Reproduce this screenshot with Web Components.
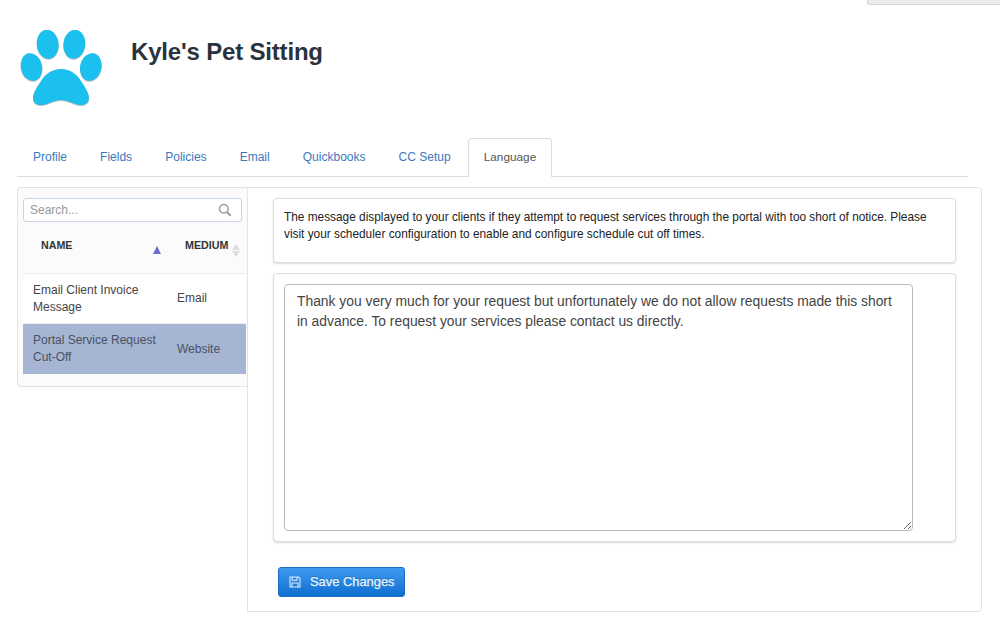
<!DOCTYPE html>
<html>
<head>
<meta charset="utf-8">
<title>Kyle's Pet Sitting</title>
<style>
html, body { margin: 0; background: #fff; }
body { font-family: "Liberation Sans", Arial, sans-serif; font-size: 12px; color: #333; }
</style>
</head>
<body>
<settings-page></settings-page>

<script>
// small helper, every element below has the same shadow setup
function shadow(el, html) {
    const root = el.attachShadow({ mode: 'open' });
    root.innerHTML = html;
    return root;
}

customElements.define('top-header', class extends HTMLElement {
    constructor() {
        super();
        shadow(this, `<style>
:host { display: block; }
.stub { height: 5px; width: 133px; margin-left: auto; background: #ececec; border: 1px solid #d4d4d4; border-top: 0; border-right: 0; border-radius: 0 0 0 3px; box-sizing: border-box; }
.row { display: flex; align-items: flex-start; padding: 25px 0 0 20px; height: 133px; box-sizing: border-box; }
svg { display: block; width: 82px; height: 77px; }
h1 { margin: 8px 0 0 29px; font-size: 24px; letter-spacing: -.18px; line-height: 28px; font-weight: bold; color: #2a323d; }
</style>
<div class="stub"></div>
<div class="row">
    <svg viewBox="20 30 82 77">
        <defs><filter id="s" x="-10%" y="-10%" width="120%" height="120%"><feDropShadow dx="0" dy="0.7" stdDeviation="0.5" flood-color="#555" flood-opacity=".55"/></filter></defs>
        <g fill="#1fc0ef" filter="url(#s)">
            <ellipse cx="47.7" cy="44.3" rx="10.9" ry="14.6" transform="rotate(-6 47.7 44.3)"/>
            <ellipse cx="74.3" cy="44.3" rx="10.9" ry="14.6" transform="rotate(6 74.3 44.3)"/>
            <ellipse cx="31.5" cy="67" rx="10.6" ry="14" transform="rotate(-13 31.5 67)"/>
            <ellipse cx="90.8" cy="67" rx="10.6" ry="14" transform="rotate(13 90.8 67)"/>
            <path d="M61 69C70 69 77 74 81 81C85 87 89 93 89 98C89 103 85 105.5 80 105C74 104.5 68 100 61 100C54 100 48 104.5 42 105C37 105.5 33 103 33 98C33 93 37 87 41 81C45 74 52 69 61 69Z"/>
        </g>
    </svg>
    <h1>Kyle's Pet Sitting</h1>
</div>`);
    }
});

customElements.define('tab-bar', class extends HTMLElement {
    constructor() {
        super();
        shadow(this, `<style>
:host { display: flex; height: 38px; box-sizing: content-box; margin: 0 32px 0 17px; border-bottom: 1px solid #ddd; }
</style><slot></slot>`);
    }
});

customElements.define('tab-item', class extends HTMLElement {
    constructor() {
        super();
        shadow(this, `<style>
:host { display: block; height: 39px; margin-right: 1.1px; box-sizing: border-box; padding: 11px 15px 0; border: 1px solid transparent; border-bottom: 0; border-radius: 4px 4px 0 0; line-height: 14px; color: #3a78bd; white-space: nowrap; }
:host([active]) { border-color: #ddd; background: #fff; color: #555; font-size: 11.8px; }
</style><slot></slot>`);
    }
});

customElements.define('search-box', class extends HTMLElement {
    constructor() {
        super();
        shadow(this, `<style>
:host { display: flex; align-items: center; justify-content: space-between; width: 219px; height: 24px; box-sizing: border-box; padding: 0 9px 0 6px; background: #fff; border: 1px solid #c9d6ea; border-radius: 3px; color: #999; line-height: 14px; }
svg { width: 14px; height: 14px; display: block; }
</style>
<span>Search...</span>
<svg viewBox="0 0 15 15" fill="none" stroke="#9aa0a6" stroke-width="1.7"><circle cx="6.2" cy="6.2" r="4.6"/><path d="M9.6 9.6L13.6 13.6" stroke-width="2.4"/></svg>`);
    }
});

customElements.define('sort-head', class extends HTMLElement {
    constructor() {
        super();
        shadow(this, `<style>
:host { display: grid; grid-template-columns: 162px 61px; width: 223px; height: 52px; box-sizing: border-box; padding-top: 17px; font-size: 10.7px; font-weight: bold; color: #333; line-height: 13px; border-bottom: 1px solid #eee; }
.name { display: flex; justify-content: space-between; box-sizing: border-box; padding: 0 24px 0 18px; }
.med { display: flex; }
.med span { flex: none; }
i { display: block; width: 0; height: 0; border: 4.5px solid transparent; border-top: 0; border-bottom: 8px solid #6a6fd0; flex: none; }
.name i { margin-top: 7px; }
.arrows { display: flex; flex-direction: column; gap: 1px; margin: 5px 0 0 4px; }
.arrows i { border-bottom: 6px solid #ddd; }
.arrows i + i { border-top: 6px solid #ddd; border-bottom: 0; }
</style>
<div class="name"><span>NAME</span><i></i></div>
<div class="med"><span>MEDIUM</span><div class="arrows"><i></i><i></i></div></div>`);
    }
});

customElements.define('list-row', class extends HTMLElement {
    static get observedAttributes() { return ['medium']; }
    constructor() {
        super();
        shadow(this, `<style>
:host { display: grid; grid-template-columns: 154px 69px; align-items: center; height: 50px; box-sizing: border-box; background: #fff; color: #444; line-height: 17px; border-bottom: 1px solid #eee; }
:host([selected]) { background: #a6b5d4; color: #4a5260; border-bottom: 0; }
.a { padding-left: 10px; }
</style>
<div class="a"><slot></slot></div><div class="b"></div>`);
    }
    attributeChangedCallback(attr, oldValue, newValue) {
        this.shadowRoot.querySelector('.b').textContent = newValue;
    }
});

customElements.define('list-pane', class extends HTMLElement {
    constructor() {
        super();
        shadow(this, `<style>
:host { display: block; height: 200px; box-sizing: border-box; padding: 10px 0 12px 5px; background: #fbfbfb; border: 1px solid #e3e3e3; border-right: 0; border-radius: 4px 0 0 4px; }
.rows { background: #fff; width: 223px; }
</style>
<search-box></search-box>
<sort-head></sort-head>
<div class="rows"><slot></slot></div>`);
    }
});

customElements.define('well-box', class extends HTMLElement {
    constructor() {
        super();
        shadow(this, `<style>
:host { display: block; box-sizing: border-box; background: #fff; border: 1px solid #ddd; border-radius: 4px; box-shadow: 0 1px 2px rgba(0,0,0,.14); padding: 10px; }
</style><slot></slot>`);
    }
});

customElements.define('save-button', class extends HTMLElement {
    constructor() {
        super();
        shadow(this, `<style>
:host { display: inline-flex; align-items: center; gap: 9px; width: 127px; height: 30px; box-sizing: border-box; padding-left: 10px; border: 1px solid #1a6fc4; border-radius: 3px; background: linear-gradient(#3d9bf0, #0f6fd0); color: #eaf4ff; font-size: 12.9px; text-shadow: 0 -1px 0 rgba(0,0,0,.2); }
svg { width: 12px; height: 12px; display: block; flex: none; }
span { -webkit-text-stroke: .25px #eaf4ff; line-height: 14px; padding-bottom: 1px; }
</style>
<svg viewBox="0 0 12 12" fill="none" stroke="#dcebfb" stroke-width="1.1"><path d="M1 1H9.5L11 2.5V11H1Z"/><path d="M3.2 1V4.2H8V1M3 11V7H9V11"/></svg>
<span>Save Changes</span>`);
    }
});

customElements.define('message-pane', class extends HTMLElement {
    constructor() {
        super();
        shadow(this, `<style>
:host { display: block; height: 425px; box-sizing: border-box; padding: 10px 25px 0 25px; background: #fff; border: 1px solid #e3e3e3; border-radius: 0 4px 4px 0; }
.desc { height: 65px; margin-bottom: 10px; font-size: 11.85px; line-height: 17px; color: #222; }
.desc span { display: block; }
.edit { height: 269px; }
textarea { display: block; width: 629px; height: 247px; box-sizing: border-box; margin: 0; padding: 6px 12px; border: 1px solid #bbb; border-radius: 4px; font: 13.85px/20px "Liberation Sans", Arial, sans-serif; color: #444; outline: 0; }
save-button { margin: 25px 0 0 5px; }
</style>
<well-box class="desc"><span>The message displayed to your clients if they attempt to request services through the portal with too short of notice. Please visit your scheduler configuration to enable and configure schedule cut off times.</span></well-box>
<well-box class="edit"><textarea spellcheck="false">Thank you very much for your request but unfortunately we do not allow requests made this short in advance. To request your services please contact us directly.</textarea></well-box>
<save-button></save-button>`);
    }
});

customElements.define('settings-page', class extends HTMLElement {
    constructor() {
        super();
        shadow(this, `<style>
:host { display: block; width: 1000px; }
.split { display: grid; grid-template-columns: 230px 735px; align-items: start; margin: 10px 0 0 17px; }
</style>
<top-header></top-header>
<tab-bar>
    <tab-item>Profile</tab-item>
    <tab-item>Fields</tab-item>
    <tab-item>Policies</tab-item>
    <tab-item>Email</tab-item>
    <tab-item>Quickbooks</tab-item>
    <tab-item>CC Setup</tab-item>
    <tab-item active>Language</tab-item>
</tab-bar>
<div class="split">
    <list-pane>
        <list-row medium="Email">Email Client Invoice Message</list-row>
        <list-row medium="Website" selected>Portal Service Request Cut-Off</list-row>
    </list-pane>
    <message-pane></message-pane>
</div>`);
    }
});
</script>
</body>
</html>
